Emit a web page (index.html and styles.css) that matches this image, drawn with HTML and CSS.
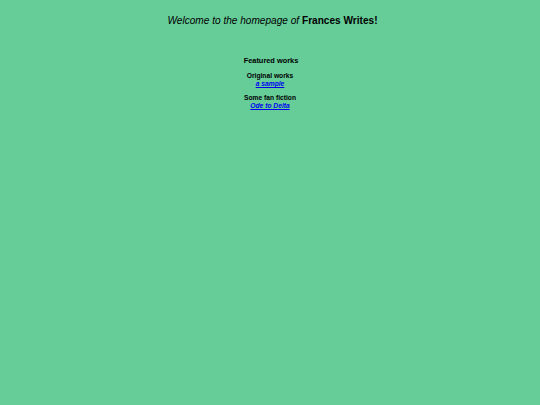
FILE: index.html
```html
<!DOCTYPE html>
<html>
<head>
<meta charset="utf-8">
<link rel="stylesheet" href="styles.css">
</head>
<body>
<h1 class="title"><em>Welcome to the homepage of</em> <strong>Frances Writes!</strong></h1>
<section class="featured">
<h2 class="heading">Featured works</h2>
<div class="group">
<div class="label">Original works</div>
<a class="work" href="#">a sample</a>
</div>
<div class="group">
<div class="label">Some fan fiction</div>
<a class="work" href="#">Ode to Delta</a>
</div>
</section>
</body>
</html>
```
FILE: styles.css
```css
html, body {
  margin: 0;
  padding: 0;
  background: #66cd99;
  font-family: "Liberation Sans", Arial, sans-serif;
  color: #000;
}
body {
  padding-top: 14px;
  text-align: center;
}
.title {
  margin: 0;
  padding-left: 5px;
  font-size: 10.1px;
  font-weight: normal;
  line-height: 14px;
}
.title strong {
  font-weight: bold;
}
.featured {
  margin-top: 28px;
}
.heading {
  margin: 0;
  padding-left: 2px;
  font-size: 7.4px;
  font-weight: bold;
  line-height: 10px;
}
.group {
  margin-top: 6px;
  font-size: 6.7px;
  font-weight: bold;
  line-height: 8px;
}
.group + .group {
  margin-top: 6px;
}
.work {
  color: #0000ee;
  font-style: italic;
  text-decoration: underline;
}
```
